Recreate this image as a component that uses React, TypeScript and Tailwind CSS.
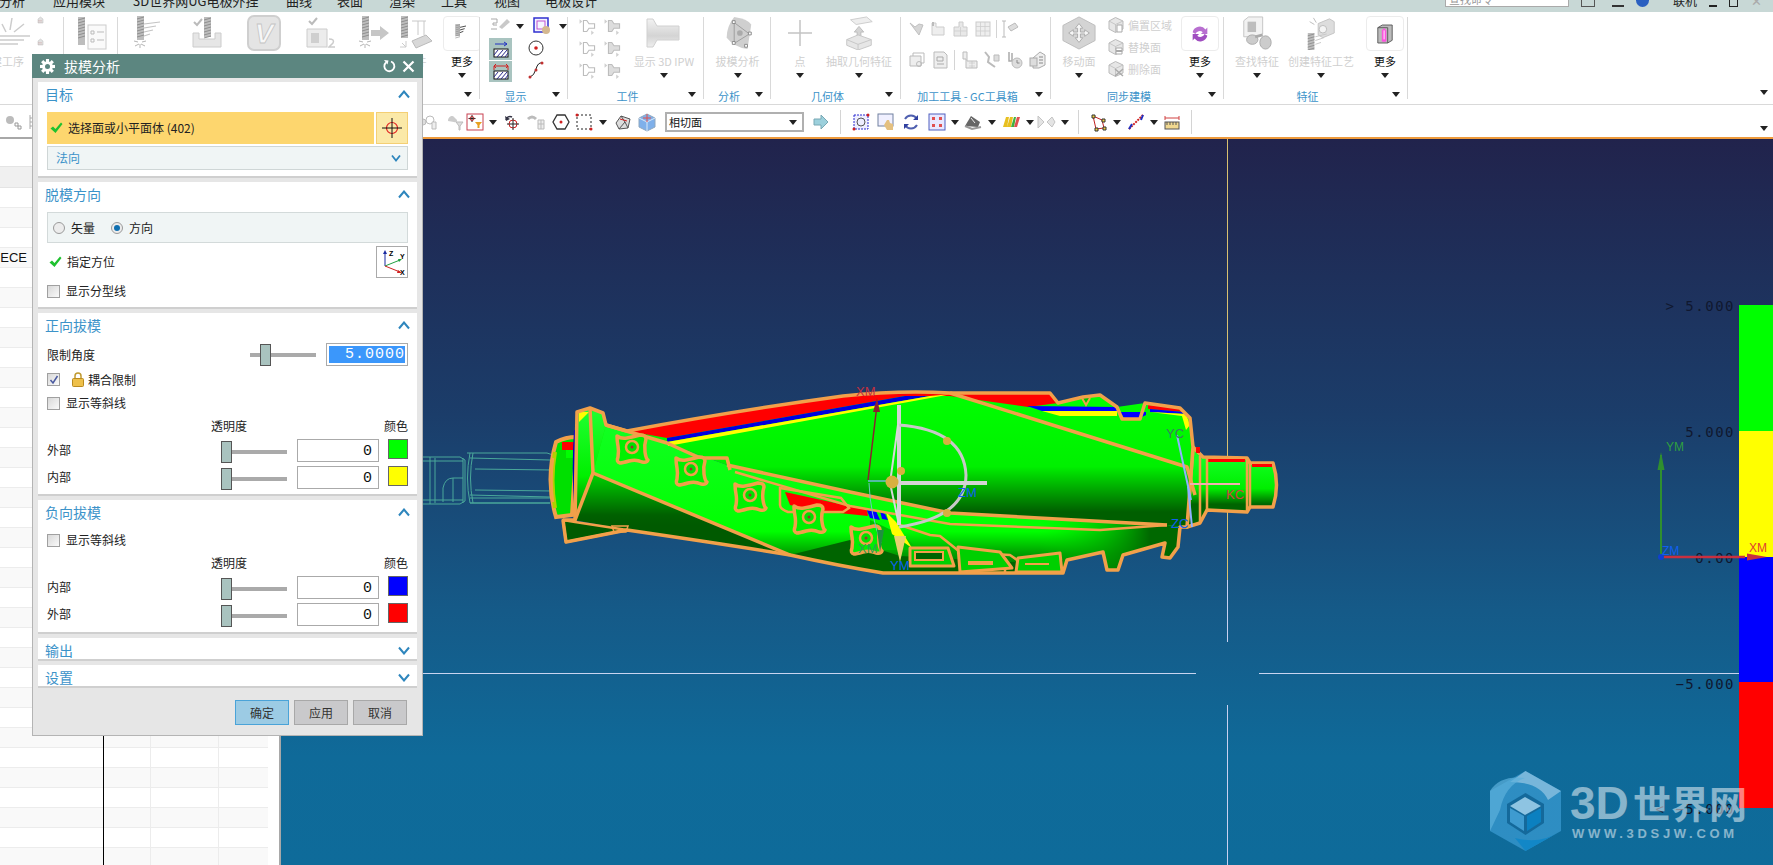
import React from "react";

const CJK = "font-['Noto_Sans_CJK_SC','Noto_Sans',sans-serif]";

const Tri = ({ className = "" }: { className?: string }) => (
  <svg width="8" height="5" viewBox="0 0 8 5" className={`shrink-0 ${className}`}><path d="M0 0H8L4 5Z" fill="#222" /></svg>
);

const G = "#c9c9c9";
const G2 = "#e2e2e2";
const Drill = ({ x = 10, y = 2, h = 24 }: { x?: number; y?: number; h?: number }) => (
  <g>
    <rect x={x} y={y} width="7" height={h} fill="#bdbdbd" />
    {[0, 1, 2, 3, 4, 5, 6].map((i) => (
      <path key={i} d={`M${x} ${y + 3 + i * 3}l7 -2`} stroke="#8f8f8f" strokeWidth="1" />
    ))}
  </g>
);
const Burst = ({ x = 13, y = 30 }: { x?: number; y?: number }) => (
  <path d={`M${x - 6} ${y - 3}l4 1M${x - 5} ${y + 2}l4 -2M${x} ${y + 4}v-4M${x + 5} ${y + 2}l-4 -2M${x + 6} ${y - 3}l-4 1`} stroke="#b5b5b5" strokeWidth="1" />
);
const Slant = ({ x = 18, y = 10 }: { x?: number; y?: number }) => (
  <path d={`M${x} ${y}l16 -2M${x} ${y + 4}l12 -2M${x} ${y + 8}l9 -2M${x} ${y + 12}l6 -2`} stroke="#c4c4c4" strokeWidth="1.2" fill="none" />
);
const Svg = ({ s = 36, children, className = "" }: { s?: number; children: React.ReactNode; className?: string }) => (
  <svg width={s} height={s} viewBox="0 0 36 36" className={`shrink-0 ${className}`}>{children}</svg>
);

const IcFirst = () => <Svg><path d="M2 8l4 8M12 2l-2 12M24 8l-10 8" stroke="#ccc" strokeWidth="1.5" /><path d="M0 20h30M0 24h24M0 28h18" stroke="#ccc" strokeWidth="1.5" /></Svg>;
const IcSm1 = () => <Svg s={18}><path d="M4 14V6l5-4 5 4v8z" fill={G2} stroke="#bbb" /><path d="M5 9h8M5 12h8" stroke="#c08080" strokeWidth="1" strokeDasharray="1 1" /></Svg>;
const IcList = () => <Svg><Drill x={4} y={1} h={28} /><rect x="14" y="9" width="18" height="24" fill="#fafafa" stroke="#ccc" /><path d="M17 15h3v3h-3zM17 23h3v3h-3zM23 16h7M23 24h7" stroke="#bbb" fill="none" /></Svg>;
const IcDrillLines = () => <Svg><Drill x={8} y={1} h={24} /><Slant x={15} y={9} /><Burst x={11} y={29} /></Svg>;
const IcCheckBox = () => <Svg><path d="M6 7l3 3 5-6" stroke="#bbb" strokeWidth="2" fill="none" /><Drill x={16} y={2} h={20} /><path d="M5 18h6v6h16v-6h6v14H5z" fill="#e6e6e6" stroke="#ccc" /></Svg>;
const IcV = () => (
  <svg width="34" height="36" viewBox="0 0 34 36" className="shrink-0">
    <rect x="1" y="1" width="32" height="34" rx="6" fill="#e4e4e4" stroke="#cfcfcf" strokeWidth="2" />
    <text x="17" y="28" textAnchor="middle" fontSize="28" fontWeight="700" fontStyle="italic" fill="#f7f7f7" stroke="#c4c4c4" strokeWidth="0.8" fontFamily="'Liberation Sans',sans-serif">V</text>
  </svg>
);
const IcMachine = () => <Svg><path d="M6 6l3 3 5-6" stroke="#bbb" strokeWidth="2" fill="none" /><path d="M4 14h20v18H4z" fill="#ececec" stroke="#ccc" /><rect x="8" y="18" width="8" height="10" fill="#cfcfcf" /><path d="M26 24q6 0 4 4l-4 4h6" stroke="#ccc" fill="none" strokeWidth="1.5" /></Svg>;
const IcDrillArrow = () => <Svg><Drill x={6} y={1} h={24} /><Burst x={9} y={29} /><path d="M15 15h9v-4l9 7-9 7v-4h-9z" fill="#c6c6c6" /></Svg>;
const IcDrillPart = () => <Svg><Drill x={3} y={1} h={22} /><path d="M14 6h14M20 6v14M26 6v14" stroke="#c8c8c8" fill="none" /><path d="M14 26l14-6 6 6-16 7z" fill="#d8d8d8" stroke="#bbb" /><path d="M4 28l4 4m0-6v6h-6" stroke="#ccc" fill="none" /></Svg>;
const IcMore1 = () => <Svg s={24}><Drill x={8} y={3} h={18} /><path d="M15 8l9-2M15 12l7-2M15 16l5-2" stroke="#333" strokeWidth="1.3" /></Svg>;

const IcGateL = ({ dark }: { dark?: boolean }) => (
  <Svg s={20}>
    <path d="M8 8h6l4 6h10v8H18l-4 6H8z" fill={dark ? "#ddd" : "#fff"} stroke="#bdbdbd" strokeWidth="2" />
    <path d="M1 6l5 4-5 4zM22 26l5 4-5 4z" fill="#d0d0d0" />
  </Svg>
);
const IcIpw = () => (
  <svg width="42" height="32" viewBox="0 0 42 32" className="shrink-0">
    <defs><linearGradient id="ipw" x1="0" y1="0" x2="0" y2="1"><stop offset="0" stopColor="#f2f2f2" /><stop offset=".6" stopColor="#d4d4d4" /><stop offset="1" stopColor="#eee" /></linearGradient></defs>
    <path d="M4 2h6l4 7h22v14H14l-4 7H4z" fill="url(#ipw)" stroke="#d0d0d0" />
  </svg>
);
const IcDraft = () => (
  <svg width="32" height="36" viewBox="0 0 32 38" className="shrink-0">
    <path d="M12 2q14 2 18 8l-4 26q-14-2-22-12Q4 12 12 2z" fill="#cfcfcf" />
    <path d="M12 8v22M12 8l16 12M12 30l16-10" stroke="#9d9d9d" fill="none" />
    <circle cx="18" cy="19" r="3" fill="#aaa" />
    <path d="M10 6h3v3h-3zM27 18h3v3h-3zM10 28h3v3h-3zM23 31h3v3h-3z" fill="#fff" stroke="#888" />
  </svg>
);
const IcPlus = () => <svg width="24" height="26" viewBox="0 0 24 26" className="shrink-0"><path d="M12 0v26M0 13h24" stroke="#c4c4c4" strokeWidth="1.5" /></svg>;
const IcExtract = () => (
  <svg width="30" height="34" viewBox="0 0 30 36" className="shrink-0">
    <path d="M6 4l17-3 6 5-17 3z" fill="#eee" stroke="#ccc" />
    <path d="M15 11l5 6h-3v6h-4v-6h-3z" fill="#d4d4d4" stroke="#bbb" />
    <path d="M2 25l12-5 14 5v6l-14 5-12-5z" fill="#e6e6e6" stroke="#c6c6c6" />
    <path d="M2 25l12 5 14-5M14 30v6" stroke="#c6c6c6" fill="none" />
  </svg>
);
const GcIcon = ({ k }: { k: number }) => (
  <Svg s={18}>
    {k === 0 && <path d="M4 6l10 8 8-6 8 2-8 20z" fill="#d6d6d6" stroke="#c0c0c0" strokeWidth="2" />}
    {k === 1 && <><path d="M4 6h8v8h16v16H4z" fill="#eee" stroke="#ccc" strokeWidth="2" /><path d="M6 4v8" stroke="#bbb" strokeWidth="4" /></>}
    {k === 2 && <><path d="M4 14h10V4h8v10h8v18H4z" fill="#e8e8e8" stroke="#ccc" strokeWidth="2" /><path d="M4 22h26M17 14v18" stroke="#ccc" strokeWidth="1.5" /></>}
    {k === 3 && <><rect x="4" y="4" width="28" height="28" fill="#eee" stroke="#ccc" strokeWidth="2" /><path d="M4 13h28M4 22h28M13 4v28M22 4v28" stroke="#ccc" strokeWidth="1.5" /></>}
    {k === 4 && <><path d="M6 2v32M2 2h8M2 34h8" stroke="#bbb" strokeWidth="2" /><path d="M14 14l14-8 6 8-14 8z" fill="#ddd" stroke="#bbb" strokeWidth="2" /></>}
    {k === 5 && <><path d="M10 4h22v20H10z" fill="#fff" stroke="#bbb" strokeWidth="2" /><path d="M4 10h22v20H4z" fill="#eee" stroke="#bbb" strokeWidth="2" /><circle cx="22" cy="26" r="5" fill="none" stroke="#bbb" strokeWidth="2" /></>}
    {k === 6 && <><path d="M6 2h20l6 6v26H6z" fill="#eee" stroke="#bbb" strokeWidth="2" /><path d="M12 12h12v8H12zM12 26h14" stroke="#aaa" strokeWidth="2" fill="none" /></>}
    {k === 7 && <><path d="M6 2v14h6v18h22V20H14V2z" fill="#eee" stroke="#bbb" strokeWidth="2" /><path d="M18 24h12M18 30h12M24 20v14" stroke="#bbb" /></>}
    {k === 8 && <><path d="M4 2l8 10-2 10 14 10" stroke="#bbb" strokeWidth="4" fill="none" /><path d="M22 8h10v12H22z" fill="#ddd" stroke="#bbb" strokeWidth="2" /></>}
    {k === 9 && <><path d="M6 2v18h6V4" stroke="#aaa" strokeWidth="3" fill="none" /><circle cx="22" cy="24" r="10" fill="#ddd" stroke="#bbb" strokeWidth="2" /><path d="M22 18v6h5" stroke="#888" strokeWidth="2" fill="none" /></>}
    {k === 10 && <><path d="M8 14l14-12 10 6v20l-12 6H8z" fill="#eee" stroke="#aaa" strokeWidth="2" /><rect x="2" y="14" width="14" height="16" fill="#ddd" stroke="#aaa" strokeWidth="2" /><path d="M20 12h8M20 18h8M20 24h8" stroke="#888" strokeWidth="2" /></>}
  </Svg>
);
const IcMoveFace = () => (
  <svg width="36" height="34" viewBox="0 0 38 36" className="shrink-0">
    <path d="M19 1l17 9v16l-17 9-17-9V10z" fill="#d4d4d4" stroke="#bbb" />
    <path d="M19 8l4 5h-2.500v4H25v-2.500l5 3.500-5 3.500V19h-4.500v4H23l-4 5-4-5h2.500v-4H13v2.500L8 18l5-3.500V17h4.500v-4H15z" fill="#f6f6f6" stroke="#aaa" />
  </svg>
);
const IcSync = ({ k }: { k: number }) => (
  <Svg s={18}>
    <path d="M4 10l13-7 15 7v16l-15 7-13-7z" fill="#e6e6e6" stroke="#bbb" strokeWidth="2" />
    <path d="M4 10l13 7 15-7M17 17v16" stroke="#bbb" strokeWidth="1.5" fill="none" />
    {k === 0 && <path d="M20 18h10v14H20z" fill="#fff" stroke="#aaa" strokeWidth="2" />}
    {k === 1 && <path d="M18 20h12v5H18zM18 27h12v5H18z" fill="#fff" stroke="#aaa" strokeWidth="2" />}
    {k === 2 && <path d="M16 18l16 14M32 18L16 32" stroke="#aaa" strokeWidth="3" />}
  </Svg>
);
const IcRefresh = () => (
  <svg width="22" height="22" viewBox="0 0 24 24" className="shrink-0">
    <path d="M4 10a8 8 0 0 1 14-3l2-2v7h-7l2-2a5 5 0 0 0-8 2z" fill="#b86fd0" />
    <path d="M20 14a8 8 0 0 1-14 3l-2 2v-7h7l-2 2a5 5 0 0 0 8-2z" fill="#a04ec0" />
  </svg>
);
const IcFind = () => (
  <svg width="32" height="34" viewBox="0 0 32 36" className="shrink-0">
    <path d="M2 5l5-4h15v18l-5 3H2z" fill="#f2f2f2" stroke="#c4c4c4" />
    <rect x="6" y="6" width="9" height="11" fill="#bdbdbd" />
    <ellipse cx="11" cy="25" rx="6" ry="5" fill="#ccc" stroke="#aaa" />
    <ellipse cx="25" cy="28" rx="6" ry="7" fill="#ccc" stroke="#aaa" />
    <path d="M14 22l8-2" stroke="#aaa" strokeWidth="3" />
  </svg>
);
const IcCreate = () => (
  <svg width="30" height="34" viewBox="0 0 30 36" className="shrink-0">
    <path d="M12 8l12-5 5 3v12l-12 5-5-3z" fill="#ddd" stroke="#c4c4c4" />
    <circle cx="17" cy="14" r="4" fill="#f4f4f4" stroke="#bbb" />
    <path d="M7 2l3 5M3 6l5 3" stroke="#bbb" />
    <Drill x={1} y={18} h={18} />
    <path d="M9 22l12-3M9 26l9-3M9 30l6-2" stroke="#c8c8c8" />
  </svg>
);
const IcFeatMore = () => (
  <svg width="18" height="22" viewBox="0 0 20 24" className="shrink-0">
    <path d="M2 5l5-3h11v17l-5 3H2z" fill="#bbb" stroke="#555" />
    <path d="M2 5h11v17" fill="none" stroke="#555" />
    <path d="M7 8l2-2 2 2v12H7z" fill="#ff4fe0" stroke="#ff4fe0" />
    <path d="M9 8v10" stroke="#fff" />
  </svg>
);

const IcFaceArrow = ({ two }: { two?: boolean }) => (
  <svg width="16" height="19" viewBox="0 0 16 19" className="shrink-0">
    {two ? <path d="M1 4h14M1 4l2-2M1 4l2 2M15 4l-2-2M15 4l-2 2M1 4v4M15 4v4" stroke="#d02020" fill="none" /> : <path d="M2 4h12M14 4l-3-2M14 4l-3 2" stroke="#2030c0" fill="none" />}
    <rect x="1" y="9" width="14" height="8" fill="#fff" stroke="#111" />
    <path d="M1 15l4-5M4 17l6-7M8 17l6-7M12 17l3-4" stroke="#2a2a8a" />
  </svg>
);

const T = ({ children, className = "" }: { children: React.ReactNode; className?: string }) => (
  <svg width="20" height="20" viewBox="0 0 20 20" className={`shrink-0 ${className}`}>{children}</svg>
);

const Section = ({ title, open = true, h, children }: { title: string; open?: boolean; h: string; children?: React.ReactNode }) => (
  <div className={`bg-white border-b-2 border-[#cfcfcf] ${h} flex flex-col`}>
    <div className="h-[24px] shrink-0 flex items-center justify-between pl-[7px] pr-[7px]">
      <span className={`text-[14px] text-[#3c93c9] ${CJK}`}>{title}</span>
      <svg width="12" height="9" viewBox="0 0 12 9">
        <path d={open ? "M1 7.500L6 1.500l5 6" : "M1 1.500l5 6 5-6"} stroke="#2e86bd" strokeWidth="2" fill="none" />
      </svg>
    </div>
    {children}
  </div>
);

const Check = ({ on }: { on?: boolean }) => (
  <span className="w-[13px] h-[13px] shrink-0 border border-[#a0a0a0] bg-[linear-gradient(135deg,#d8d8d8,#fafafa)] flex items-center justify-center">
    {on && <svg width="10" height="10" viewBox="0 0 10 10"><path d="M1.500 5l2.500 3 4.500-7" stroke="#4a5aa0" strokeWidth="1.500" fill="none" /></svg>}
  </span>
);
const Radio = ({ on }: { on?: boolean }) => (
  <span className="w-[12px] h-[12px] rounded-full border border-[#9a9a9a] bg-[#ececec] flex items-center justify-center shrink-0">
    {on && <span className="w-[6px] h-[6px] rounded-full bg-[#0f6fb0]" />}
  </span>
);
const GreenCheck = () => (
  <svg width="13" height="12" viewBox="0 0 13 12" className="shrink-0"><path d="M0.500 6.500L3 4.500l2.500 2.500L11 0.500l1.500 1.500-7 9z" fill="#1fc12f" /></svg>
);

const SliderThumb = () => <div className="w-[11px] h-[22px] bg-[#a9c3bf] border border-[#555] shrink-0" />;

const TransRow = ({ label, swatch, mt }: { label: string; swatch: string; mt: string }) => (
  <div className={`flex items-start ${mt}`}>
    <span className={`w-[174px] text-[12px] leading-[22px] text-[#222] ${CJK}`}>{label}</span>
    <div className="flex items-center w-[66px] pt-[2px]">
      <SliderThumb />
      <span className="h-[4px] w-[55px] bg-[#aaaaaa]" />
    </div>
    <span className="ml-[10px] w-[82px] h-[23px] border border-[#aaa] bg-white text-right pr-[6px] text-[15px] leading-[23px] text-[#111] font-['Liberation_Mono',monospace]">0</span>
    <span className={`ml-[9px] w-[20px] h-[20px] border border-[#666] ${swatch}`} />
  </div>
);

const Head = () => (
  <div className={`flex text-[12px] leading-[16px] text-[#222] ${CJK}`}>
    <span className="ml-[164px] w-[36px] whitespace-nowrap">透明度</span>
    <span className="ml-[137px] whitespace-nowrap">颜色</span>
  </div>
);

const Gear = () => (
  <svg width="15" height="15" viewBox="0 0 24 24">
    {[0, 45, 90, 135, 180, 225, 270, 315].map((a) => (
      <rect key={a} x="9.500" y="0" width="5" height="6" fill="#fff" transform={`rotate(${a} 12 12)`} />
    ))}
    <circle cx="12" cy="12" r="8.500" fill="#fff" />
    <circle cx="12" cy="12" r="4" fill="#5c8680" />
  </svg>
);

const Dialog = () => (
  <div className="absolute left-[32px] top-[54px] w-[391px] h-[682px] bg-[#e6e6e6] border border-[#b4b4b4] flex flex-col">
    <div className="h-[24px] -mx-[1px] -mt-[1px] bg-[#5c8680] flex items-center pl-[8px] pr-[8px] shrink-0">
      <Gear />
      <span className={`ml-[9px] text-[14px] text-white ${CJK}`}>拔模分析</span>
      <svg width="14" height="14" viewBox="0 0 14 14" className="ml-auto">
        <path d="M4 3.500a5 5 0 1 0 5-1" stroke="#fff" strokeWidth="1.800" fill="none" /><path d="M2 1l4.500 0.500-1 4z" fill="#fff" />
      </svg>
      <svg width="13" height="13" viewBox="0 0 13 13" className="ml-[6px]"><path d="M1.500 1.500l10 10M11.500 1.500l-10 10" stroke="#fff" strokeWidth="2.200" /></svg>
    </div>
    <div className="px-[5px] pt-[4px] flex flex-col gap-[4px]">
      <Section title="目标" h="h-[96px]">
        <div className="mt-[6px] mx-[9px] flex gap-[2px]">
          <div className="w-[327px] h-[32px] bg-[#fdd66e] flex items-center pl-[3px]">
            <GreenCheck />
            <span className={`ml-[5px] text-[12px] text-[#222] ${CJK}`}>选择面或小平面体 (402)</span>
          </div>
          <div className="w-[32px] h-[32px] bg-[#fbe9a8] border border-[#f4cf74] flex items-center justify-center">
            <svg width="20" height="20" viewBox="0 0 20 20"><circle cx="10" cy="10" r="5.500" fill="none" stroke="#e02020" strokeWidth="1.200" /><path d="M10 0v20M0 10h20" stroke="#111" /></svg>
          </div>
        </div>
        <div className="mt-[2px] mx-[9px] h-[24px] bg-[#f0f5f5] border border-[#cfd6d6] flex items-center justify-between pl-[8px] pr-[6px]">
          <span className={`text-[12px] text-[#3c93c9] ${CJK}`}>法向</span>
          <svg width="10" height="8" viewBox="0 0 10 8"><path d="M1 1.500l4 5 4-5" stroke="#2e86bd" strokeWidth="1.800" fill="none" /></svg>
        </div>
      </Section>
      <Section title="脱模方向" h="h-[127px]">
        <div className="mt-[6px] mx-[9px] h-[31px] bg-[#f0f5f5] border border-[#d3dada] flex items-center pl-[5px] pt-[1px]">
          <Radio />
          <span className={`ml-[6px] text-[12px] text-[#222] ${CJK}`}>矢量</span>
          <span className="ml-[16px]"><Radio on /></span>
          <span className={`ml-[6px] text-[12px] text-[#222] ${CJK}`}>方向</span>
        </div>
        <div className="mt-[3px] mx-[9px] flex items-center h-[32px]">
          <span className="ml-[2px]"><GreenCheck /></span>
          <span className={`ml-[5px] text-[12px] text-[#222] ${CJK}`}>指定方位</span>
          <span className="ml-auto w-[32px] h-[32px] border border-[#aaa] bg-white flex items-center justify-center">
            <svg width="28" height="28" viewBox="0 0 28 28">
              <path d="M7 18V4" stroke="#1a2aa0" /><path d="M7 2l-2 4h4z" fill="#1a2aa0" />
              <path d="M7 18l15-6" stroke="#20a040" /><path d="M24 11l-4 0 1 3z" fill="#20a040" />
              <path d="M7 18l15 6" stroke="#d02020" /><path d="M24 25l-4-3-1 3z" fill="#d02020" />
              <text x="11" y="8" fontSize="7" fontWeight="700" fontFamily="'Liberation Sans',sans-serif">Z</text>
              <text x="22" y="11" fontSize="7" fontWeight="700" fontFamily="'Liberation Sans',sans-serif">Y</text>
              <text x="22" y="27" fontSize="7" fontWeight="700" fontFamily="'Liberation Sans',sans-serif">X</text>
            </svg>
          </span>
        </div>
        <div className="mt-[6px] mx-[9px] flex items-center">
          <Check />
          <span className={`ml-[6px] text-[12px] leading-[14px] text-[#222] ${CJK}`}>显示分型线</span>
        </div>
      </Section>
      <Section title="正向拔模" h="h-[183px]">
        <div className="mt-[6px] mx-[9px] flex items-center h-[23px]">
          <span className={`text-[12px] text-[#222] ${CJK}`}>限制角度</span>
          <div className="ml-[155px] w-[66px] flex items-center relative">
            <span className="h-[4px] w-[66px] bg-[#aaaaaa]" />
            <div className="absolute left-[10px] top-[-9px]"><SliderThumb /></div>
          </div>
          <div className="ml-[10px] w-[82px] h-[23px] border border-[#aaa] bg-white p-[2px] overflow-hidden">
            <div className="h-[17px] bg-[#3b97fb] text-right whitespace-nowrap overflow-hidden text-white text-[15px] leading-[17px] tracking-[1px] font-['Liberation_Mono',monospace]">5.0000</div>
          </div>
        </div>
        <div className="mt-[7px] mx-[9px] flex items-center h-[13px]">
          <Check on />
          <svg width="12" height="15" viewBox="0 0 12 15" className="ml-[12px]">
            <path d="M3 7V4a3 3 0 0 1 6 0v3" stroke="#c09a30" strokeWidth="1.500" fill="none" />
            <rect x="0.500" y="6.500" width="11" height="8" rx="1" fill="#eec04a" stroke="#b98b20" />
          </svg>
          <span className={`ml-[4px] text-[12px] text-[#222] ${CJK}`}>耦合限制</span>
        </div>
        <div className="mt-[10px] mx-[9px] flex items-center">
          <Check />
          <span className={`ml-[6px] text-[12px] leading-[14px] text-[#222] ${CJK}`}>显示等斜线</span>
        </div>
        <div className="mt-[8px] mx-[9px]">
          <Head />
          <TransRow label="外部" swatch="bg-[#00ff00]" mt="mt-[5px]" />
          <TransRow label="内部" swatch="bg-[#ffff00]" mt="mt-[3px]" />
        </div>
      </Section>
      <Section title="负向拔模" h="h-[134px]">
        <div className="mt-[9px] mx-[9px] flex items-center">
          <Check />
          <span className={`ml-[6px] text-[12px] leading-[14px] text-[#222] ${CJK}`}>显示等斜线</span>
        </div>
        <div className="mt-[8px] mx-[9px]">
          <Head />
          <TransRow label="内部" swatch="bg-[#0000ff]" mt="mt-[5px]" />
          <TransRow label="外部" swatch="bg-[#ff0000]" mt="mt-[3px]" />
        </div>
      </Section>
      <Section title="输出" open={false} h="h-[23px]" />
      <Section title="设置" open={false} h="h-[23px]" />
    </div>
    <div className={`mt-[12px] pl-[202px] flex gap-[5px] text-[12px] text-[#333] ${CJK}`}>
      <button className="w-[54px] h-[25px] bg-[#9ccbe4] border border-[#4aa3d8]">确定</button>
      <button className="w-[54px] h-[25px] bg-[#c9c9cb] border border-[#a8a8a8]">应用</button>
      <button className="w-[54px] h-[25px] bg-[#c9c9cb] border border-[#a8a8a8]">取消</button>
    </div>
  </div>
);

const Big = ({ label, children, w, dark }: { label: string; children: React.ReactNode; w: string; dark?: boolean }) => (
  <div className={`${w} shrink-0 flex flex-col items-center`}>
    <div className="h-[34px] flex items-center justify-center">{children}</div>
    <span className={`mt-[3px] text-[11px] leading-[16px] whitespace-nowrap ${dark ? "text-[#222]" : "text-[#cfcfcf]"} ${CJK}`}>{label}</span>
    <Tri className="mt-[4px]" />
  </div>
);
const More = ({ children, ml }: { children: React.ReactNode; ml: string }) => (
  <div className={`${ml} w-[38px] shrink-0 flex flex-col items-center`}>
    <div className="w-[38px] h-[35px] rounded-[4px] border border-[#ececec] flex items-center justify-center">{children}</div>
    <span className={`mt-[2px] text-[11px] leading-[16px] text-[#111] whitespace-nowrap ${CJK}`}>更多</span>
    <Tri className="mt-[4px]" />
  </div>
);
const Group = ({ w, label, children }: { w: string; label?: string; children: React.ReactNode }) => (
  <div className={`${w} shrink-0 h-full flex flex-col relative overflow-hidden`}>
    <div className="h-[74px] pt-[4px] flex items-start">{children}</div>
    <div className="flex-1 relative flex items-center justify-center pr-[17px] pt-[1px]">
      {label && <span className={`text-[11px] leading-[16px] text-[#3c93c9] whitespace-nowrap ${CJK}`}>{label}</span>}
      <Tri className="absolute right-[8px] top-[6px]" />
    </div>
    <span className="absolute right-0 top-[5px] bottom-[5px] w-[1px] bg-[#d9d9d9]" />
  </div>
);

const Menu = () => (
  <div className={`h-[12px] bg-[#c8d8d6] relative overflow-hidden flex text-[13px] leading-[18px] text-[#222] ${CJK}`}>
    <div className="flex -mt-[8px]">
      <span className="w-[54px] -ml-[1px]">分析</span>
      <span className="w-[80px]">应用模块</span>
      <span className="w-[153px] whitespace-nowrap">3D世界网UG电极外挂</span>
      <span className="w-[51px]">曲线</span>
      <span className="w-[52px]">表面</span>
      <span className="w-[52px]">渲染</span>
      <span className="w-[53px]">工具</span>
      <span className="w-[51px]">视图</span>
      <span className="w-[60px]">电极设计</span>
    </div>
    <div className="ml-auto flex -mt-[8px] items-start">
      <div className="w-[124px] h-[15px] bg-white border border-[#aaa] text-[#999] text-[11px] leading-[12px] pl-[3px]">查找命令</div>
      <span className="ml-[12px] w-[14px] h-[15px] border border-[#555]" />
      <span className="ml-[17px] w-[12px] h-[15px] border-b-2 border-[#333]" />
      <span className="ml-[12px] w-[13px] h-[15px] rounded-full bg-[#2a5fc0]" />
      <span className="ml-[24px] text-[#222] text-[12px]">联机</span>
      <span className="ml-[12px] w-[8px] h-[15px] border-b-2 border-[#222]" />
      <span className="ml-[12px] w-[9px] h-[15px] border border-[#222]" />
      <span className="ml-[13px] mr-[11px] text-[#aaa] text-[13px]">✕</span>
    </div>
  </div>
);

const Ribbon = () => (
  <div className="h-[93px] bg-white flex border-b border-[#d9d9d9]">
    <Group w="w-[64px]">
      <div className="-ml-[20px] w-[50px] flex flex-col items-start shrink-0">
        <div className="h-[34px] ml-[20px]"><IcFirst /></div>
        <span className={`mt-[3px] text-[11px] leading-[16px] text-[#cfcfcf] whitespace-nowrap ${CJK}`}>创建工序</span>
      </div>
      <div className="flex flex-col gap-[4px] ml-[6px] shrink-0"><IcSm1 /><IcSm1 /></div>
    </Group>
    <Group w="w-[54px]"><div className="ml-[10px]"><IcList /></div></Group>
    <Group w="w-[362px]">
      <Big w="w-[58px] ml-[0px]" label="工序"><IcDrillLines /></Big>
      <Big w="w-[59px]" label="验证"><IcCheckBox /></Big>
      <Big w="w-[57px]" label="刀轨"><IcV /></Big>
      <Big w="w-[58px]" label="机床"><IcMachine /></Big>
      <Big w="w-[47px]" label="移动"><IcDrillArrow /></Big>
      <Big w="w-[37px]" label="工件"><IcDrillPart /></Big>
      <More ml="ml-[9px]"><IcMore1 /></More>
    </Group>
    <Group w="w-[88px]" label="显示">
      <div className="ml-[9px] flex flex-col items-start">
        <div className="flex items-center h-[20px]">
          <svg width="22" height="18" viewBox="0 0 22 18" className="shrink-0"><path d="M2 2h6v4H4v2h4M2 12h6" stroke="#aaa" fill="none" /><path d="M10 10l8-8 3 3-8 7z" fill={G} /></svg>
          <Tri className="ml-[5px]" />
          <svg width="18" height="18" viewBox="0 0 18 18" className="ml-[9px] shrink-0"><rect x="1" y="1" width="14" height="14" fill="#f4f4ff" stroke="#3030d0" strokeWidth="1.500" /><rect x="4" y="4" width="8" height="8" fill="none" stroke="#c050d0" /><circle cx="13" cy="13" r="4" fill="#d4b890" /></svg>
          <Tri className="ml-[8px]" />
        </div>
        <div className="flex mt-[2px]">
          <div className="flex flex-col gap-[1px]">
            <div className="w-[23px] h-[22px] bg-[#a9c4c0] flex items-center justify-center"><IcFaceArrow /></div>
            <div className="w-[23px] h-[21px] bg-[#a9c4c0] flex items-center justify-center"><IcFaceArrow two /></div>
          </div>
          <div className="ml-[15px] w-[18px] flex flex-col items-center pt-[2px] gap-[5px]">
            <svg width="16" height="16" viewBox="0 0 16 16"><circle cx="8" cy="8" r="7" fill="#fff" stroke="#333" /><circle cx="8" cy="8" r="1.800" fill="#d02020" /></svg>
            <svg width="16" height="18" viewBox="0 0 16 18"><path d="M2 16q4-1 6-8t6-6" stroke="#222" fill="none" /><circle cx="2" cy="16" r="1.500" fill="#c03030" /><circle cx="8" cy="9" r="1.500" fill="#c03030" /><circle cx="14" cy="2" r="1.500" fill="#c03030" /></svg>
          </div>
        </div>
      </div>
    </Group>
    <Group w="w-[136px]" label="工件">
      <div className="ml-[11px] mr-[6px] grid grid-cols-2 gap-x-[5px] gap-y-[2px] shrink-0">
        <IcGateL /><IcGateL dark /><IcGateL /><IcGateL dark /><IcGateL /><IcGateL dark />
      </div>
      <Big w="w-[70px] -ml-[1px]" label="显示 3D IPW"><IcIpw /></Big>
    </Group>
    <Group w="w-[67px]" label="分析"><Big w="w-[67px]" label="拔模分析"><IcDraft /></Big></Group>
    <Group w="w-[130px]" label="几何体">
      <Big w="w-[58px]" label="点"><IcPlus /></Big>
      <Big w="w-[60px]" label="抽取几何特征"><IcExtract /></Big>
    </Group>
    <Group w="w-[150px]" label="加工工具 - GC工具箱">
      <div className="ml-[7px] flex flex-col gap-[12px]">
        <div className="flex gap-[4px] mt-[4px] items-center">
          <GcIcon k={0} /><GcIcon k={1} /><GcIcon k={2} /><GcIcon k={3} /><span className="w-[1px] h-[18px] bg-[#d4d4d4]" /><GcIcon k={4} />
        </div>
        <div className="flex gap-[5px] items-center">
          <GcIcon k={5} /><GcIcon k={6} /><span className="w-[1px] h-[20px] bg-[#d4d4d4]" /><GcIcon k={7} /><GcIcon k={8} /><GcIcon k={9} /><GcIcon k={10} />
        </div>
      </div>
    </Group>
    <Group w="w-[173px]" label="同步建模">
      <Big w="w-[56px]" label="移动面"><IcMoveFace /></Big>
      <div className={`w-[68px] flex flex-col gap-[4px] text-[11px] leading-[18px] text-[#cfcfcf] whitespace-nowrap ${CJK}`}>
        <div className="flex items-center gap-[3px]"><IcSync k={0} />偏置区域</div>
        <div className="flex items-center gap-[3px]"><IcSync k={1} />替换面</div>
        <div className="flex items-center gap-[3px]"><IcSync k={2} />删除面</div>
      </div>
      <More ml="ml-[6px]"><IcRefresh /></More>
    </Group>
    <Group w="w-[184px]" label="特征">
      <Big w="w-[66px]" label="查找特征"><IcFind /></Big>
      <Big w="w-[60px] ml-[1px]" label="创建特征工艺"><IcCreate /></Big>
      <More ml="ml-[15px]"><IcFeatMore /></More>
    </Group>
    <div className="flex-1 relative">
      <Tri className="absolute right-[5px] top-[78px]" />
    </div>
  </div>
);

const Sep = ({ ml }: { ml: string }) => <span className={`${ml} w-[1px] h-[24px] bg-[#d4d4d4] shrink-0`} />;

const Toolbar = () => (
  <div className="h-[32px] pt-[2px] bg-white flex items-center relative">
    <T className="ml-[2px]"><circle cx="8" cy="8" r="4" fill="#bbb" /><path d="M13 11h3v3h-3zM16 14h3v3h-3z" fill="none" stroke="#999" /></T>
    <T className="ml-[4px]"><path d="M4 3v14M4 6h8M4 10h8M4 14h8" stroke="#aaa" fill="none" /></T>
    <T className="ml-[372px]"><circle cx="5" cy="10" r="3" fill="#ddd" stroke="#bbb" /><circle cx="12" cy="8" r="4" fill="none" stroke="#bbb" /><path d="M14 10h4v7h-4z" fill="#eee" stroke="#bbb" /></T>
    <T className="ml-[7px]"><path d="M3 9c0-5 5-6 6-4l2 2c2 1 1 4-2 3z" fill="#ccc" /><path d="M11 10h7l-3 4v4h-1v-4z" fill="#ddd" stroke="#bbb" /></T>
    <T className="ml-[0px]"><rect x="2" y="2" width="16" height="16" fill="#fff" stroke="#c84050" /><path d="M7 3v7M3.500 6.500h7" stroke="#222" /><circle cx="7" cy="6.500" r="2" fill="none" stroke="#c03030" /><path d="M10 10h7l-2.500 3v3h-2v-3z" fill="#e8a020" /></T>
    <Tri className="ml-[4px]" />
    <T className="ml-[5px]"><path d="M4 8a4 4 0 0 1 6-3" stroke="#334" strokeWidth="1.500" fill="none" /><path d="M3 4l1 5 4-2z" fill="#334" /><circle cx="11" cy="12" r="4" fill="none" stroke="#d02020" /><path d="M11 6v12M5 12h12" stroke="#222" /></T>
    <T className="ml-[4px]"><path d="M2 7q4-4 8 0" stroke="#bbb" strokeWidth="3" fill="none" /><path d="M12 8h6v9h-6zM12 12h6M15 8v9" fill="#eee" stroke="#bbb" /></T>
    <T className="ml-[5px]"><path d="M6 3h8l4 7-4 7H6l-4-7z" fill="#fff" stroke="#333" strokeWidth="1.300" /><circle cx="10" cy="10" r="1.500" fill="#d02020" /></T>
    <T className="ml-[3px]"><rect x="3" y="3" width="14" height="14" fill="none" stroke="#222" strokeDasharray="2 2" /><circle cx="3" cy="3" r="1.500" fill="#d02020" /><circle cx="17" cy="17" r="1.500" fill="#d02020" /></T>
    <Tri className="ml-[5px]" />
    <T className="ml-[6px]"><path d="M3 11l5-7 9 3-2 9-9 1z" fill="#ddd" stroke="#555" /><path d="M8 4l4 6-6 7M12 10l3 6" stroke="#555" fill="none" /><path d="M7 7l7 2" stroke="#d02020" /></T>
    <T className="ml-[4px]"><path d="M2 6l8-4 8 4v9l-8 4-8-4z" fill="#7fb0ea" stroke="#8fa8c0" /><path d="M2 6l8 4 8-4M10 10v9" stroke="#dbe8f6" fill="none" /><path d="M10 2v8M6 6h8" stroke="#e05050" /></T>
    <div className={`ml-[8px] w-[139px] h-[20px] border-2 border-[#b0b0b0] flex items-center pl-[2px] pr-[5px] shrink-0 text-[11px] text-[#111] ${CJK}`}>
      相切面<Tri className="ml-auto" />
    </div>
    <T className="ml-[7px]"><path d="M3 7h7V3l7 7-7 7v-4H3z" fill="#9cd0dc" stroke="#78a8b4" /></T>
    <Sep ml="ml-[9px]" />
    <T className="ml-[10px]"><rect x="3" y="3" width="14" height="14" fill="#eef" stroke="#2a2ad0" strokeDasharray="2 1" /><circle cx="10" cy="10" r="4" fill="none" stroke="#555" /><circle cx="3" cy="17" r="1.500" fill="#d02020" /><circle cx="17" cy="3" r="1.500" fill="#d02020" /></T>
    <T className="ml-[5px]"><rect x="2" y="2" width="15" height="12" fill="#f0f0ff" stroke="#7080a0" /><path d="M11 8l2 0 1 3 3 1v6h-6l-3-5z" fill="#e4c080" /></T>
    <T className="ml-[5px]"><path d="M4 7a7 7 0 0 1 12 0" stroke="#5060b0" strokeWidth="2" fill="none" /><path d="M16 13a7 7 0 0 1-12 0" stroke="#5060b0" strokeWidth="2" fill="none" /><path d="M17 3v5h-5zM3 17v-5h5z" fill="#3040a0" /></T>
    <T className="ml-[6px]"><rect x="2" y="2" width="16" height="16" fill="#e8e8ff" stroke="#5060c0" /><path d="M5 5h3v3H5zM12 5h3v3h-3zM5 12h3v3H5zM12 12h3v3h-3z" fill="#e05050" /></T>
    <Tri className="ml-[4px]" />
    <T className="ml-[4px]"><path d="M2 14l6-10 9 6-2 5z" fill="#666" /><path d="M2 14l7 3 9-2" stroke="#999" strokeWidth="2" fill="none" /><path d="M8 6l4 5" stroke="#eee" /></T>
    <Tri className="ml-[5px]" />
    <T className="ml-[5px]"><path d="M2 15l3-10h3l-2 10zM6 15l3-10h3l-2 10z" fill="#e8c020" /><path d="M10 15l3-10h2l-2 10z" fill="#40b040" /><path d="M13 15l3-10h3l-3 10z" fill="#e05050" /></T>
    <Tri className="ml-[5px]" />
    <T className="ml-[2px]"><path d="M2 4l6 6-6 6zM11 10l5-5 3 5-3 5z" fill="#e4e4e4" stroke="#c4c4c4" /></T>
    <Tri className="ml-[5px]" />
    <Sep ml="ml-[9px]" />
    <T className="ml-[10px]"><path d="M4 4l9 4 2 8-8 1z" fill="#fff" stroke="#c02020" /><path d="M3 3h3v3H3zM13 7h3v3h-3zM14 15h3v3h-3zM6 16h3v3H6z" fill="#f0d040" stroke="#333" /></T>
    <Tri className="ml-[4px]" />
    <T className="ml-[5px]"><path d="M3 17L17 3" stroke="#d02020" strokeDasharray="2 1" strokeWidth="2" /><path d="M3 17l3-5M17 3l-2 5" stroke="#2030c0" strokeWidth="2" /></T>
    <Tri className="ml-[4px]" />
    <T className="ml-[4px]"><path d="M3 6h14M3 4v4M17 4v4" stroke="#d04040" /><rect x="3" y="10" width="14" height="7" fill="#f0d890" stroke="#555" /><path d="M5 10v3M8 10v3M11 10v3M14 10v3" stroke="#555" /></T>
    <Sep ml="ml-[9px]" />
    <Tri className="absolute right-[5px] top-[21px]" />
  </div>
);

const LeftTable = () => (
  <div className="w-[281px] shrink-0 h-[728px] bg-white border-r-2 border-r-[#a8a8a8] border-t-2 border-t-[#a8a8a8] overflow-hidden pt-[27px] relative">
    <div className="h-[22px] w-[268px] bg-[#f0f0f0] border-y border-[#e4e4e4]" />
    {Array.from({ length: 34 }).map((_, i) => (
      <div key={i} className={`w-[268px] h-[20px] flex border-b border-[#ececec] ${i % 2 ? "bg-[#f9f9f9]" : "bg-white"}`}>
        <div className="w-[104px] border-r border-[#ececec] text-[13px] leading-[19px] text-[#111] font-['Liberation_Sans',sans-serif] whitespace-nowrap overflow-hidden">
          {i === 3 && <span className="block -ml-[12px]">PIECE</span>}
        </div>
        <div className="w-[47px] border-r border-[#ececec]" />
        <div className="w-[68px] border-r border-[#ececec]" />
      </div>
    ))}
    <span className="absolute left-[103px] top-[590px] bottom-0 w-[1px] bg-black" />
  </div>
);

const O = "#f2a04a";
const TOP = "Q740 410 843 396Q900 390 950 393L1050 393";
const REST = "L1058 403L1083 397L1100 395L1117 407L1122 419L1140 419L1145 403L1180 408L1190 418L1193 447L1187 527L1180 527L1178 547L1170 558L1162 557L1165 543L1123 555L1118 570L1107 570L1103 552L1067 560L1063 573L1013 573L957 573L883 573Q840 566 790 555Q730 545 627 530L566 542L563 520";

const Pad = ({ x, y }: { x: number; y: number }) => (
  <g transform={`translate(${x} ${y})`}>
    <path d="M-16-13q4 3 10 2t13-3q6 0 6 4-2 6-1 13t3 8q-1 3-6 2-6-3-13-1t-9 2q-4-1-2-6 1-6 0-11t-1-10z" fill="#00f000" stroke={O} strokeWidth="3.500" strokeLinejoin="round" />
    <circle cx="-1" cy="-2" r="6" fill="#00e000" stroke={O} strokeWidth="2.500" />
    <circle cx="-1" cy="-2" r="1.500" fill="#a03030" />
  </g>
);

const Model = () => (
  <g>
    <g fill="none" stroke="#4aa89a" strokeWidth="1">
      <path d="M423 457h37l5 3v41l-5 3h-37M423 461h40M423 500h40" />
      <path d="M430 457v47M435 458v45M463 458v45" />
      <path d="M443 488q2-10 10-10h10M443 488v14M453 478v24" />
      <path d="M467 453h80l6 2M470 453q-5 25 0 50l80 0M473 453q-5 25 0 50M470 458l80 2M470 495l80 2M470 503h80M470 498h80M475 469l78 1M475 490l78 1" />
    </g>
    <path d="M1193 447L1203 457L1247 458L1250 463L1273 463Q1280 485 1273 507L1250 507L1247 512L1207 510L1200 523L1187 527z" fill="url(#stub)" stroke={O} strokeWidth="3.500" strokeLinejoin="round" />
    <path d="M1207 459h38v3h-38zM1252 464h20v3h-20zM1196 447h4v6h-4z" fill="#ff0000" />
    <path d="M1207 458v52M1250 463v44M1247 458v54M1200 456v67" stroke={O} strokeWidth="2.500" fill="none" />
    {/* left collar */}
    <path d="M556 442Q545 480 556 517L572 515L577 437Q565 437 556 442z" fill="#00e000" stroke={O} strokeWidth="4" />
    <path d="M562 442h12v8h-12z" fill="#ff0000" />
    <path d="M566 450h8v8h-8z" fill="#00ff00" />
    <path d="M555 452q-5 28 0 56" stroke="#b0d000" strokeWidth="4" fill="none" />
    <path d="M553 458q-3 22 0 44" stroke={O} strokeWidth="2.500" fill="none" />
    <path d="M574 430l5 2-1 85-3 0q-4-40-1-87z" fill="#0000c0" />
    {/* body base */}
    <path d={`M590 408L603 413L606 425L627 431${TOP}L1058 403L1083 397L1100 395L1117 407L1145 403L1180 408L1190 418L1193 447L1187 527L1167 525L950 513L850 492L727 465L667 443L640 452L593 473z`} fill="url(#upper)" />
    {/* pad band */}
    <path d="M606 425L667 443L727 465L850 492L950 513L1167 525L1180 527L1178 547L1170 558L1162 557L1165 543L1123 555L1118 570L1107 570L1103 552L1067 560L1063 573L883 573Q840 566 790 555L593 473z" fill="url(#band)" />
    <path d="M1040 520L1167 525L1180 527L1178 547L1170 558L1162 557L1165 543L1123 555L1118 570L1107 570L1103 552L1067 560L1063 573L1040 573z" fill="url(#bandR)" />
    <path d="M790 555L850 540L900 556L1010 562L1063 560L1063 573L883 573Q840 566 790 555z" fill="#006400" />
    <path d="M870 520l30 14 20 16-50 0z" fill="#00c000" />
    {/* lower wedge */}
    <path d="M593 473L790 555Q730 545 627 530L575 520z" fill="url(#wedge)" />
    <path d="M577 412L590 408L603 413L606 425L593 473L575 520z" fill="url(#flange)" />
    <path d="M563 520L575 522L627 530L566 542z" fill="url(#wedge)" stroke={O} strokeWidth="2.500" />
    <path d="M579 412h10l-7 7-3 3z" fill="#ffff00" />
    {/* colored bands */}
    <path d={`M627 431${TOP}L1058 403L1028 407L950 396L905 396L667 438z`} fill="#ff0000" />
    <path d="M667 438L905 396L930 396L667 442z" fill="#0000e0" />
    <path d="M667 442L930 396L952 394L668 446z" fill="#ffff00" />
    <path d="M1027 406L1117 407L1117 411L1042 411z" fill="#0000ff" />
    <path d="M1042 411L1117 411L1117 416L1060 416z" fill="#ffff00" />
    <path d="M1120 412h26v3l-8 4-14-1z" fill="#0000ff" />
    <path d="M1148 405L1180 408L1184 412L1148 409z" fill="#ff0000" />
    <path d="M1150 409L1184 412L1185 414L1150 412z" fill="#0000ff" />
    <path d="M1150 412L1186 414L1190 425L1186 430L1182 416z" fill="#ffff00" />
    <path d="M785 492L867 510L868 516L810 510L790 505z" fill="#ff0000" />
    <path d="M866 508L876 511L880 520L870 518zM880 511L885 514L888 520L882 519z" fill="#0000ff" />
    <path d="M886 512L896 522L912 548L892 534z" fill="#ffff00" />
    <path d="M780 488v17q0 4 8 7h55l6-4-8-10z" fill="none" stroke={O} strokeWidth="2.500" />
    <path d="M1082 398l4 7 4-7M1050 393l8 10" fill="#00c000" stroke={O} strokeWidth="2" />
    {/* outlines */}
    <g fill="none" stroke={O} strokeWidth="3.500" strokeLinejoin="round">
      <path d={`M627 431${TOP}${REST}`} />
      <path d="M627 431L606 425L603 413L590 408L577 412L575 520L563 520" />
      <path d="M590 408L593 473L790 555" />
      <path d="M593 473L575 520" />
      <path d="M950 393L1187 467L1195 495" />
      <path d="M727 465L850 492L950 513L1167 525" />
      <path d="M735 472L850 506L950 524L1100 530L1167 525" strokeWidth="2.500" />
      <path d="M606 425L667 443L700 458L727 458L730 470" />
      <path d="M900 525L930 535L940 536L960 552L1010 555L1020 562M964 550l0 20M1005 558l0 14" strokeWidth="2.500" />
    </g>
    <path d="M1177 435L1191 500M1188 487L1192 527" stroke="#8fb0ff" strokeWidth="2" fill="none" />
    <path d="M612 526l16 0 -2 6h-12z" fill="none" stroke={O} strokeWidth="1.500" />
    <Pad x={633} y={449} /><Pad x={692} y={471} /><Pad x={751} y={497} /><Pad x={810} y={519} /><Pad x={867} y={540} />
    <g fill="#00d000" stroke={O} strokeWidth="3" strokeLinejoin="round">
      <path d="M910 548h38l6 18h-44z" />
      <path d="M958 547L1000 552L1012 568L960 572z" />
      <path d="M1018 558L1060 553L1062 572L1016 572z" />
    </g>
    <path d="M915 552h28v8h-28zM968 562h24v2h-24M1025 564h24" stroke={O} strokeWidth="2" fill="#006400" />
    {/* gizmo */}
    <g fill="none">
      <path d="M899 405V525" stroke="#d4d4d4" strokeWidth="4" />
      <path d="M899 425q65 5 67 50 0 42-67 52" stroke="#c8c8c8" strokeWidth="3" />
      <path d="M892 483L987 483" stroke="#d4d4d4" strokeWidth="4" />
      <path d="M898 425L890 483L899 525" stroke="#d8d8d8" strokeWidth="2" />
      <path d="M868 480L877 405" stroke="#8a2030" strokeWidth="1.500" />
      <path d="M868 481h24" stroke="#70b8d8" strokeWidth="1.500" />
      <path d="M869 483q1 30 12 60" stroke="#70c8c0" strokeWidth="1" />
      <path d="M1190 484h50" stroke="#f0b0b0" strokeWidth="2" />
    </g>
    <path d="M877 398l-4 14h7z" fill="#8a2030" />
    <path d="M900 562l-6-26h12z" fill="#e8d070" />
    <path d="M877 530l3 22 4-22z" fill="#209040" />
    <circle cx="892" cy="482" r="6.500" fill="#d8b040" />
    <circle cx="901" cy="471" r="4" fill="#d8b040" />
    <circle cx="947" cy="441" r="4" fill="#d8b040" />
    <circle cx="947" cy="513" r="4" fill="#d8b040" />
    <g fontFamily="'Liberation Sans',sans-serif" fontSize="13">
      <text x="856" y="396" fill="#c03040">XM</text>
      <text x="958" y="497" fill="#1060f0">ZM</text>
      <text x="1166" y="438" fill="#3a7a60">YC</text>
      <text x="1171" y="528" fill="#1060f0">ZC</text>
      <text x="1226" y="499" fill="#d04040">KC</text>
      <text x="890" y="570" fill="#1060f0">YM</text>
      <text x="858" y="553" fill="#30a050">XM</text>
    </g>
  </g>
);

const Viewport = () => (
  <div className="flex-1 h-[728px] bg-[linear-gradient(180deg,#21234c_0%,#1b3d6a_38%,#155a88_65%,#0f6a99_85%,#0e6b9a_100%)] border-t-2 border-[#ee9a3c] overflow-hidden">
    <svg width="1492" height="726" viewBox="281 139 1492 726" className="block">
      <defs>
        <linearGradient id="upper" gradientUnits="userSpaceOnUse" x1="0" y1="395" x2="0" y2="525"><stop offset="0" stopColor="#00ff00" /><stop offset=".55" stopColor="#00f000" /><stop offset=".9" stopColor="#005f00" /><stop offset="1" stopColor="#005f00" /></linearGradient>
        <linearGradient id="stub" gradientUnits="userSpaceOnUse" x1="0" y1="460" x2="0" y2="512"><stop offset="0" stopColor="#10ff20" /><stop offset=".55" stopColor="#00ee00" /><stop offset=".85" stopColor="#006400" /><stop offset="1" stopColor="#006400" /></linearGradient>
        <linearGradient id="band" gradientUnits="userSpaceOnUse" x1="0" y1="430" x2="0" y2="575"><stop offset="0" stopColor="#10ff20" /><stop offset=".7" stopColor="#00ff00" /><stop offset=".85" stopColor="#00a000" /><stop offset="1" stopColor="#006000" /></linearGradient>
        <linearGradient id="bandR" gradientUnits="userSpaceOnUse" x1="1040" y1="0" x2="1150" y2="0"><stop offset="0" stopColor="#00e000" stopOpacity="0" /><stop offset="1" stopColor="#006800" /></linearGradient>
        <linearGradient id="wedge" gradientUnits="userSpaceOnUse" x1="0" y1="475" x2="0" y2="525"><stop offset="0" stopColor="#00d000" /><stop offset=".8" stopColor="#006000" /><stop offset="1" stopColor="#005a00" /></linearGradient>
        <linearGradient id="flange" gradientUnits="userSpaceOnUse" x1="0" y1="410" x2="0" y2="520"><stop offset="0" stopColor="#20ff30" /><stop offset=".6" stopColor="#00f000" /><stop offset="1" stopColor="#007000" /></linearGradient>
      </defs>

      <path d="M1227.500 139V642M1227.500 705V865" stroke="#c8d0f0" strokeWidth="1" />
      <path d="M1227.500 139V580" stroke="#d8c070" strokeWidth="1" />
      <path d="M281 673.500H1196M1259 673.500H1773" stroke="#c8d4f0" strokeWidth="1" />

      <Model />

      <rect x="1739" y="305" width="34" height="126" fill="#00ff00" />
      <rect x="1739" y="431" width="34" height="126" fill="#ffff00" />
      <rect x="1739" y="557" width="34" height="125" fill="#0000ff" />
      <rect x="1739" y="682" width="34" height="126" fill="#ff0000" />
      <g fontFamily="'DejaVu Sans Mono',monospace" fontSize="14" fill="#10182f" letterSpacing="1.500" textAnchor="end">
        <text x="1735" y="311">&gt; 5.000</text>
        <text x="1735" y="437">5.000</text>
        <text x="1735" y="563">0.00</text>
        <text x="1735" y="689">−5.000</text>
        <text x="1735" y="814">&lt; −5.000</text>
      </g>
      <path d="M1661 557V455" stroke="#2f8f2f" strokeWidth="2" />
      <path d="M1661 452l-3.500 18h7z" fill="#2f8f2f" />
      <path d="M1661 557H1745" stroke="#c83040" strokeWidth="2.500" />
      <path d="M1767 557l-20-3.500v7z" fill="#c83040" />
      <circle cx="1661" cy="557" r="3" fill="#1040d0" />
      <g fontFamily="'Liberation Sans',sans-serif" fontSize="12">
        <text x="1666" y="451" fill="#2f9f3f">YM</text>
        <text x="1662" y="555" fill="#1060f0">ZM</text>
        <text x="1749" y="552" fill="#e04030">XM</text>
      </g>

      <g>
        <path d="M1525.500 771L1561 791V831L1525.500 851L1490 831V791z" fill="#3a9ad0" fillOpacity=".75" />
        <path d="M1525.500 771L1561 791L1548 800Q1540 782 1510 782z" fill="#a0cde6" fillOpacity=".65" />
        <path d="M1490 791Q1500 775 1525 778Q1505 785 1500 810L1490 831z" fill="#5db0dc" fillOpacity=".7" />
        <path d="M1561 831Q1540 845 1515 838L1525.500 851z" fill="#0f86c8" fillOpacity=".9" />
        <path d="M1525.500 793L1544 804V823L1525.500 835L1507 823V804z" fill="#14699b" />
        <path d="M1525 797L1541 806L1525 815L1510 806z" fill="#8ec4e2" />
        <path d="M1510 808L1524 816V831L1510 822z" fill="#3e9bd0" />
        <path d="M1541 808L1527 816V831L1541 822z" fill="#0b80c0" />
      </g>
      <text x="1570" y="819" fontFamily="'Liberation Sans',sans-serif" fontWeight="700" fontSize="46" fill="#ffffff" fillOpacity=".5">3D</text>
      <text x="1633" y="818" fontFamily="'Noto Sans CJK SC',sans-serif" fontWeight="700" fontSize="38" fill="#ffffff" fillOpacity=".5">世界网</text>
      <text x="1572" y="838" fontFamily="'Liberation Sans',sans-serif" fontWeight="700" fontSize="13" letterSpacing="3.700" fill="#ffffff" fillOpacity=".5">WWW.3DSJW.COM</text>
    </svg>
  </div>
);

export default function App() {
  return (
    <div className="w-[1773px] h-[865px] relative overflow-hidden bg-white font-['Liberation_Sans',sans-serif]">
      <Menu />
      <Ribbon />
      <Toolbar />
      <div className="flex">
        <LeftTable />
        <Viewport />
      </div>
      <Dialog />
    </div>
  );
}
